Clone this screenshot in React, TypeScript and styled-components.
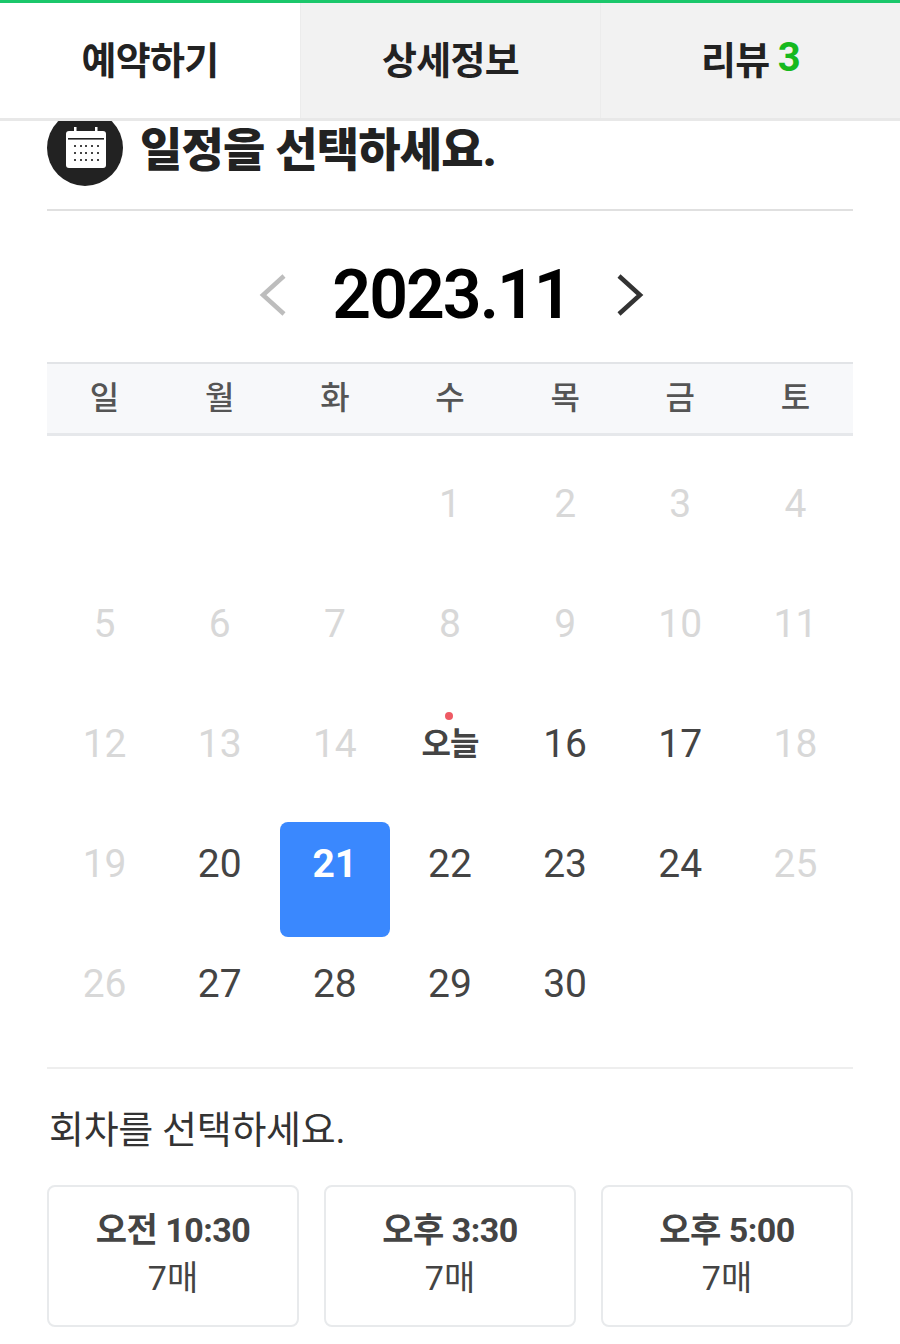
import styled, { createGlobalStyle } from 'styled-components';

const GlobalStyle = createGlobalStyle`
    html, body {
        margin: 0;
        padding: 0;
        background: #fff;
    }
    body {
        font-family: Roboto, "Noto Sans CJK KR", sans-serif;
        color: #444;
    }
`

const weekdays = ['일', '월', '화', '수', '목', '금', '토']

type DayKind = 'off' | 'open' | 'today' | 'selected' | 'blank'
type Day = { label: string; kind: DayKind }

const openDays = [16, 17, 20, 22, 23, 24, 27, 28, 29, 30]

const buildDays = (): Day[] => {
    const days: Day[] = [0, 1, 2].map(() => ({ label: '', kind: 'blank' }))
    for (let d = 1; d <= 30; d++) {
        if (d === 15) days.push({ label: '오늘', kind: 'today' })
        else if (d === 21) days.push({ label: '21', kind: 'selected' })
        else days.push({ label: String(d), kind: openDays.includes(d) ? 'open' : 'off' })
    }
    return days
}

const sessions = [
    { time: '오전 10:30', seats: '7매' },
    { time: '오후 3:30', seats: '7매' },
    { time: '오후 5:00', seats: '7매' },
]

const CalendarIcon = () => (
    <svg width="42" height="42" viewBox="0 0 42 42" fill="none">
        <rect x="1" y="4" width="40" height="37" rx="3" fill="#fff" />
        <rect x="9" y="0" width="2.5" height="8" fill="#fff" />
        <rect x="30" y="0" width="2.5" height="8" fill="#fff" />
        <rect x="3" y="11" width="36" height="1.6" fill="#222" />
        {[18, 25, 32].map(y =>
            [9, 15, 20, 26, 32].map(x => <rect key={`${x}-${y}`} x={x} y={y} width="2" height="2" fill="#444" />)
        )}
    </svg>
)

export default function App() {
    return (
        <Page>
            <GlobalStyle />
            <Tabs>
                <Tab $active>예약하기</Tab>
                <Tab>상세정보</Tab>
                <Tab>리뷰 <Count>3</Count></Tab>
            </Tabs>
            <Content>
                <Heading>
                    <IconCircle><CalendarIcon /></IconCircle>
                    <h2>일정을 선택하세요.</h2>
                </Heading>
                <MonthRow>
                    <Arrow viewBox="0 0 30 44" $muted>
                        <path d="M26 3 L5 22 L26 41" />
                    </Arrow>
                    <MonthLabel>2023.11</MonthLabel>
                    <Arrow viewBox="0 0 30 44">
                        <path d="M4 3 L25 22 L4 41" />
                    </Arrow>
                </MonthRow>
                <WeekRow>
                    {weekdays.map(w => <WeekCell key={w}>{w}</WeekCell>)}
                </WeekRow>
                <DayGrid>
                    {buildDays().map((d, i) => (
                        <DayCell key={i} $kind={d.kind}>
                            {d.kind === 'today' && <TodayDot />}
                            {d.label}
                        </DayCell>
                    ))}
                </DayGrid>
                <SessionBlock>
                    <SessionTitle>회차를 선택하세요.</SessionTitle>
                    <SessionRow>
                        {sessions.map(s => (
                            <SessionCard key={s.time}>
                                <strong>{s.time}</strong>
                                <span>{s.seats}</span>
                            </SessionCard>
                        ))}
                    </SessionRow>
                </SessionBlock>
            </Content>
        </Page>
    )
}

const Page = styled.div`
    width: 900px;
    height: 1344px;
    overflow: hidden;
    background: #fff;
`

const Tabs = styled.nav`
    position: relative;
    z-index: 2;
    display: grid;
    grid-template-columns: 300px 300px 300px;
    height: 121px;
    box-sizing: border-box;
    border-top: 3px solid #1bc76b;
    border-bottom: 3px solid #e8e8e8;
`

const Tab = styled.div<{ $active?: boolean }>`
    display: flex;
    align-items: center;
    justify-content: center;
    gap: 8px;
    padding-bottom: 7px;
    font-size: 38px;
    font-weight: 700;
    letter-spacing: -0.7px;
    color: #222;
    background: ${p => (p.$active ? '#fff' : '#f2f2f2')};
    border-left: ${p => (p.$active ? 'none' : '1px solid #ececec')};
`

const Count = styled.span`
    color: #16b91e;
    font-family: Roboto, sans-serif;
    font-size: 40px;
`

const Content = styled.main`
    margin-top: -11px;
    padding: 0 47px 0 47px;
`

const Heading = styled.div`
    display: flex;
    align-items: center;
    gap: 17px;
    height: 76px;
    padding-bottom: 23px;
    border-bottom: 2px solid #e0e0e0;

    h2 {
        margin: 0 0 4px;
        font-size: 46px;
        font-weight: 900;
        letter-spacing: -0.8px;
        color: #222;
    }
`

const IconCircle = styled.div`
    width: 76px;
    height: 76px;
    flex: none;
    border-radius: 50%;
    background: #222;
    display: flex;
    align-items: center;
    justify-content: center;
    padding-left: 1px;
    box-sizing: border-box;
`

const MonthRow = styled.div`
    display: flex;
    align-items: center;
    justify-content: center;
    gap: 44px;
    height: 151px;
    box-sizing: border-box;
    padding: 16px 0 0 3px;
`

const MonthLabel = styled.div`
    font-size: 68px;
    font-weight: 600;
    letter-spacing: -2px;
    color: #000;
`

const Arrow = styled.svg<{ $muted?: boolean }>`
    width: 30px;
    height: 44px;
    fill: none;
    stroke: ${p => (p.$muted ? '#bdbdbd' : '#333')};
    stroke-width: 4.5;
`

const WeekRow = styled.div`
    display: grid;
    grid-template-columns: repeat(7, 1fr);
    height: 74px;
    box-sizing: border-box;
    background: #f7f8fa;
    border-top: 2px solid #e2e4e7;
    border-bottom: 3px solid #e6e8eb;
`

const WeekCell = styled.div`
    display: flex;
    align-items: center;
    justify-content: center;
    padding-bottom: 7px;
    font-size: 32px;
    font-weight: 500;
    color: #555;
`

const dayColor: Record<DayKind, string> = {
    off: '#d8d8d8',
    open: '#444',
    today: '#444',
    selected: '#fff',
    blank: 'transparent',
}

const DayGrid = styled.div`
    display: grid;
    grid-template-columns: repeat(7, 1fr);
    grid-auto-rows: 115px;
    row-gap: 5px;
    padding-top: 26px;
`

const DayCell = styled.div<{ $kind: DayKind }>`
    position: relative;
    margin: 0 ${p => (p.$kind === 'selected' ? '2.5px' : '0')};
    padding-top: 19px;
    box-sizing: border-box;
    text-align: center;
    line-height: 47px;
    font-size: ${p => (p.$kind === 'today' ? '32px' : '39px')};
    font-weight: ${p => (p.$kind === 'today' || p.$kind === 'selected' ? 700 : 400)};
    letter-spacing: ${p => (p.$kind === 'today' ? '-1px' : '0')};
    color: ${p => dayColor[p.$kind]};
    background: ${p => (p.$kind === 'selected' ? '#3a88fe' : 'transparent')};
    border-radius: 8px;
`

const TodayDot = styled.i`
    position: absolute;
    top: 10px;
    left: 50%;
    margin-left: -5px;
    width: 8px;
    height: 8px;
    border-radius: 50%;
    background: #ee5a64;
`

const SessionBlock = styled.section`
    margin-top: 10px;
    border-top: 2px solid #eeeeee;
`

const SessionTitle = styled.div`
    margin: 35px 0 29px 2px;
    font-size: 38px;
    line-height: 52px;
    font-weight: 400;
    letter-spacing: -0.3px;
    color: #333;
`

const SessionRow = styled.div`
    display: grid;
    grid-template-columns: repeat(3, 1fr);
    column-gap: 25px;
`

const SessionCard = styled.div`
    height: 142px;
    box-sizing: border-box;
    border: 2px solid #e8eaec;
    border-radius: 8px;
    display: flex;
    flex-direction: column;
    align-items: center;
    padding-top: 20px;
    gap: 2px;
    color: #444;

    strong {
        font-size: 34px;
        line-height: 46px;
        font-weight: 700;
        letter-spacing: -0.5px;
    }
    span {
        font-size: 34px;
        line-height: 46px;
        font-weight: 400;
    }
`
